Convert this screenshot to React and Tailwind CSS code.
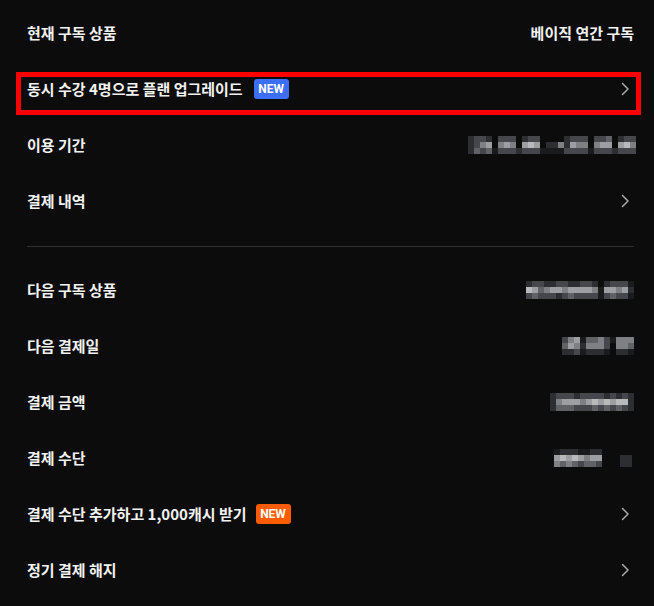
import React from "react";

const PAL = ["transparent", "#1a1b1d", "#2c2e32", "#45474c", "#606266", "#7e8084", "#9c9ea1", "#b8b9bb"];

function Mosaic({ rows, cell = 6 }) {
  const w = rows[0].length * cell;
  const h = rows.length * cell;
  return (
    <svg width={w} height={h} viewBox={`0 0 ${w} ${h}`} className="block shrink-0">
      {rows.map((r, y) =>
        r.split("").map((c, x) =>
          c === "0" ? null : (
            <rect key={`${x}-${y}`} x={x * cell} y={y * cell} width={cell} height={cell} fill={PAL[+c]} />
          )
        )
      )}
    </svg>
  );
}

function Chevron() {
  return (
    <svg width="9" height="14" viewBox="0 0 9 14" className="block shrink-0">
      <path d="M1.5 1.5 L7 7 L1.5 12.5" fill="none" stroke="#a9a9a9" strokeWidth="1.5" strokeLinecap="round" strokeLinejoin="round" />
    </svg>
  );
}

function Badge({ color }) {
  return (
    <span
      className={`inline-flex h-[20px] w-[35px] items-center justify-center rounded-[3px] text-[12px] font-bold text-white ${color}`}
      style={{ fontFamily: "Roboto, 'Liberation Sans', sans-serif" }}
    >
      NEW
    </span>
  );
}

function Row({ label, badge, right, annotated }) {
  return (
    <div className="relative flex h-[56px] items-center justify-between">
      <div className="flex items-center">
        <span className="text-[15px] font-semibold text-[#f2f2f2]">{label}</span>
        {badge}
      </div>
      <div className="flex items-center pr-[4px]">{right}</div>
      {annotated && (
        <div className="pointer-events-none absolute left-[-11px] right-[-7px] top-[11px] bottom-[2px] border-[5px] border-[#ff0000]" />
      )}
    </div>
  );
}

export default function App() {
  return (
    <div
      className="min-h-[606px] w-[654px] bg-[#0c0c0c] pl-[27px] pr-[20px] pt-[5px]"
      style={{ fontFamily: "'Noto Sans CJK KR', 'Noto Sans', sans-serif" }}
    >
      <Row
        label="현재 구독 상품"
        right={<span className="-mr-[4px] text-[15px] font-semibold text-[#f2f2f2]">베이직 연간 구독</span>}
      />
      <Row
        label="동시 수강 4명으로 플랜 업그레이드"
        badge={<Badge color="bg-[#3d6ef6] ml-[11px]" />}
        right={<Chevron />}
        annotated
      />
      <Row
        label="이용 기간"
        right={
          <div className="-mr-[6px]">
            <Mosaic
              rows={[
                "2332033302330000233303340233",
                "2356056506760225265505660675",
                "2434133323331111333313332333",
              ]}
            />
          </div>
        }
      />
      <Row label="결제 내역" right={<Chevron />} />

      <div className="mb-[15px] mt-[17px] h-px bg-[#2f2f2f]" />

      <Row
        label="다음 구독 상품"
        right={
          <div className="-mr-[4px]">
            <Mosaic
              rows={[
                "233223322332023331",
                "764566566665166562",
                "343332343333134331",
              ]}
            />
          </div>
        }
      />
      <Row
        label="다음 결제일"
        right={
          <div className="-mr-[4px]">
            <Mosaic
              rows={[
                "356144531555",
                "465255530554",
                "223122210221",
              ]}
            />
          </div>
        }
      />
      <Row
        label="결제 금액"
        right={
          <div className="-mr-[4px]">
            <Mosaic
              rows={[
                "23332333323232",
                "25666567676772",
                "24443334343432",
              ]}
            />
          </div>
        }
      />
      <Row
        label="결제 수단"
        right={
          <div className="-mr-[2px] flex items-end">
            <Mosaic
              rows={[
                "122211220",
                "676765660",
                "545434430",
              ]}
            />
            <div className="ml-[12px]">
              <Mosaic rows={["22", "22"]} />
            </div>
          </div>
        }
      />
      <Row
        label="결제 수단 추가하고 1,000캐시 받기"
        badge={<Badge color="bg-[#ff5c00] ml-[9px]" />}
        right={<Chevron />}
      />
      <Row label="정기 결제 해지" right={<Chevron />} />
    </div>
  );
}
